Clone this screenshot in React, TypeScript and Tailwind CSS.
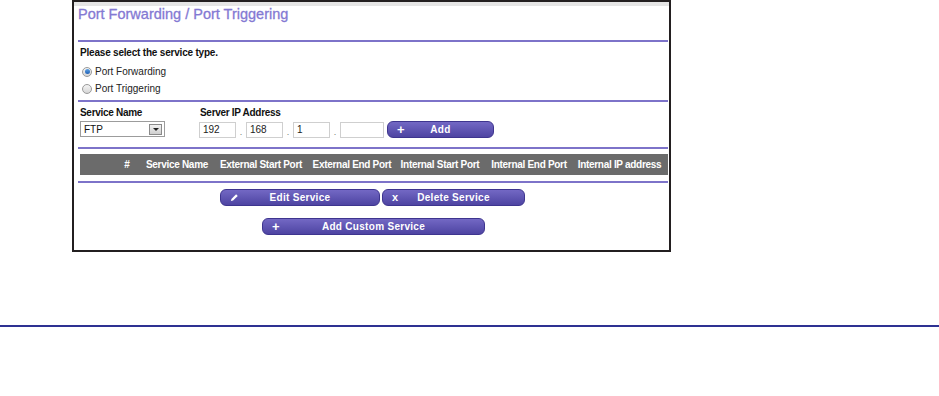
import React from 'react'

const font = { fontFamily: '"Liberation Sans", Arial, sans-serif' }

function Rule() {
  return <div className="h-[2px] bg-[#7d73c9]" />
}

function Radio({ checked, label }: { checked?: boolean; label: string }) {
  return (
    <div className="flex items-center h-[17px] pl-[4px]">
      <span className="w-[10px] h-[10px] rounded-full border border-[#9a9a9a] bg-gradient-to-b from-[#f4f4f4] to-[#d6d6d6] flex items-center justify-center">
        {checked && <span className="w-[5px] h-[5px] rounded-full bg-gradient-to-b from-[#5fa4e6] to-[#1f5fb3]" />}
      </span>
      <span className="ml-[3px] text-[10px] text-[#222]">{label}</span>
    </div>
  )
}

function IpBox({ value, w }: { value: string; w: string }) {
  return (
    <div className={`${w} h-[16px] border border-[#cfcfcf] bg-white text-[10px] leading-[14px] pl-[3px] text-[#222]`}>
      {value}
    </div>
  )
}

function Dot() {
  return <div className="w-[10px] h-[16px] flex items-end justify-center text-[9px] leading-[12px] text-[#777]">.</div>
}

function PurpleButton({ w, icon, label }: { w: string; icon: React.ReactNode; label: string }) {
  return (
    <div
      className={`${w} relative h-[17px] rounded-[6px] border border-[#3e358f] bg-gradient-to-b from-[#7368c4] to-[#4e44a2] flex items-center justify-center text-white font-bold text-[10px] tracking-[0.3px]`}
    >
      <span className="absolute left-[9px] top-0 h-full flex items-center">{icon}</span>
      {label}
    </div>
  )
}

function PencilIcon() {
  return (
    <svg width="9" height="9" viewBox="0 0 10 10">
      <path d="M1 9 L1.6 6.6 L6.8 1.4 L8.6 3.2 L3.4 8.4 Z" fill="white" />
    </svg>
  )
}

const headers = [
  { label: '#', w: 'w-[20px]' },
  { label: 'Service Name', w: 'w-[80px]' },
  { label: 'External Start Port', w: 'w-[88px]' },
  { label: 'External End Port', w: 'w-[94px]' },
  { label: 'Internal Start Port', w: 'w-[82px]' },
  { label: 'Internal End Port', w: 'w-[96px]' },
  { label: 'Internal IP address', w: 'w-[85px]' },
]

export default function App() {
  return (
    <div className="w-[939px] h-[396px] bg-white overflow-hidden" style={font}>
      {/* Router page frame */}
      <div className="ml-[72px] w-[599px] h-[252px] border-2 border-[#231f20] flex flex-col">
        <div className="h-[4px] bg-[#e5e5e5]" />
        <div className="pl-[4px] pr-[1px] flex flex-col">
          <div className="-mt-[1px] h-[18px] leading-[18px] text-[14.5px] text-[#8479d3] whitespace-nowrap [-webkit-text-stroke:0.3px_#8479d3]">
            Port Forwarding / Port Triggering
          </div>
          <div className="mt-[17px]"><Rule /></div>

          <div className="mt-[4px] h-[14px] leading-[14px] pl-[2px] text-[10px] font-bold tracking-[-0.2px] text-[#111]">
            Please select the service type.
          </div>
          <div className="mt-[3px]">
            <Radio checked label="Port Forwarding" />
            <Radio label="Port Triggering" />
          </div>
          <div className="mt-[3px]"><Rule /></div>

          {/* Service name + IP */}
          <div className="mt-[4px] flex pl-[2px]">
            <div className="w-[119px] flex flex-col">
              <div className="h-[14px] leading-[14px] text-[10px] font-bold tracking-[-0.3px] text-[#111]">Service Name</div>
              <div className="mt-[1px] w-[85px] h-[16px] border border-[#9c9c9c] bg-white flex items-center justify-between pl-[3px] pr-[2px]">
                <span className="text-[10px] text-[#111]">FTP</span>
                <span className="w-[13px] h-[11px] border border-[#8a8a8a] bg-gradient-to-b from-[#f2f2f2] to-[#cfcfcf] flex items-center justify-center">
                  <span className="w-0 h-0 border-l-[3px] border-r-[3px] border-t-[3px] border-l-transparent border-r-transparent border-t-[#222]" />
                </span>
              </div>
            </div>
            <div className="flex flex-col">
              <div className="h-[14px] leading-[14px] pl-[1px] text-[10px] font-bold tracking-[-0.3px] text-[#111]">Server IP Address</div>
              <div className="mt-[1px] flex items-center">
                <IpBox value="192" w="w-[37px]" />
                <Dot />
                <IpBox value="168" w="w-[37px]" />
                <Dot />
                <IpBox value="1" w="w-[37px]" />
                <Dot />
                <IpBox value="" w="w-[44px]" />
                <div className="ml-[3px]">
                  <PurpleButton w="w-[107px]" icon={<span className="text-[13px] font-bold leading-none">+</span>} label="Add" />
                </div>
              </div>
            </div>
          </div>
          <div className="mt-[9px]"><Rule /></div>

          {/* Table header */}
          <div className="mt-[5px] ml-[2px] h-[21px] bg-[#6b6b6b] flex items-center pl-[37px] text-white text-[10px] font-bold tracking-[-0.3px]">
            {headers.map((h) => (
              <div key={h.label} className={`${h.w} text-center whitespace-nowrap`}>{h.label}</div>
            ))}
          </div>
          <div className="mt-[6px]"><Rule /></div>

          <div className="mt-[6px] ml-[142px] flex gap-[2px]">
            <PurpleButton w="w-[160px]" icon={<PencilIcon />} label="Edit Service" />
            <PurpleButton w="w-[143px]" icon={<span className="text-[11px] font-bold leading-none">x</span>} label="Delete Service" />
          </div>
          <div className="mt-[12px] ml-[184px] flex">
            <PurpleButton w="w-[223px]" icon={<span className="text-[13px] font-bold leading-none">+</span>} label="Add Custom Service" />
          </div>
        </div>
      </div>

      <div className="mt-[73px] h-[2px] bg-[#2e3192]" />
    </div>
  )
}
